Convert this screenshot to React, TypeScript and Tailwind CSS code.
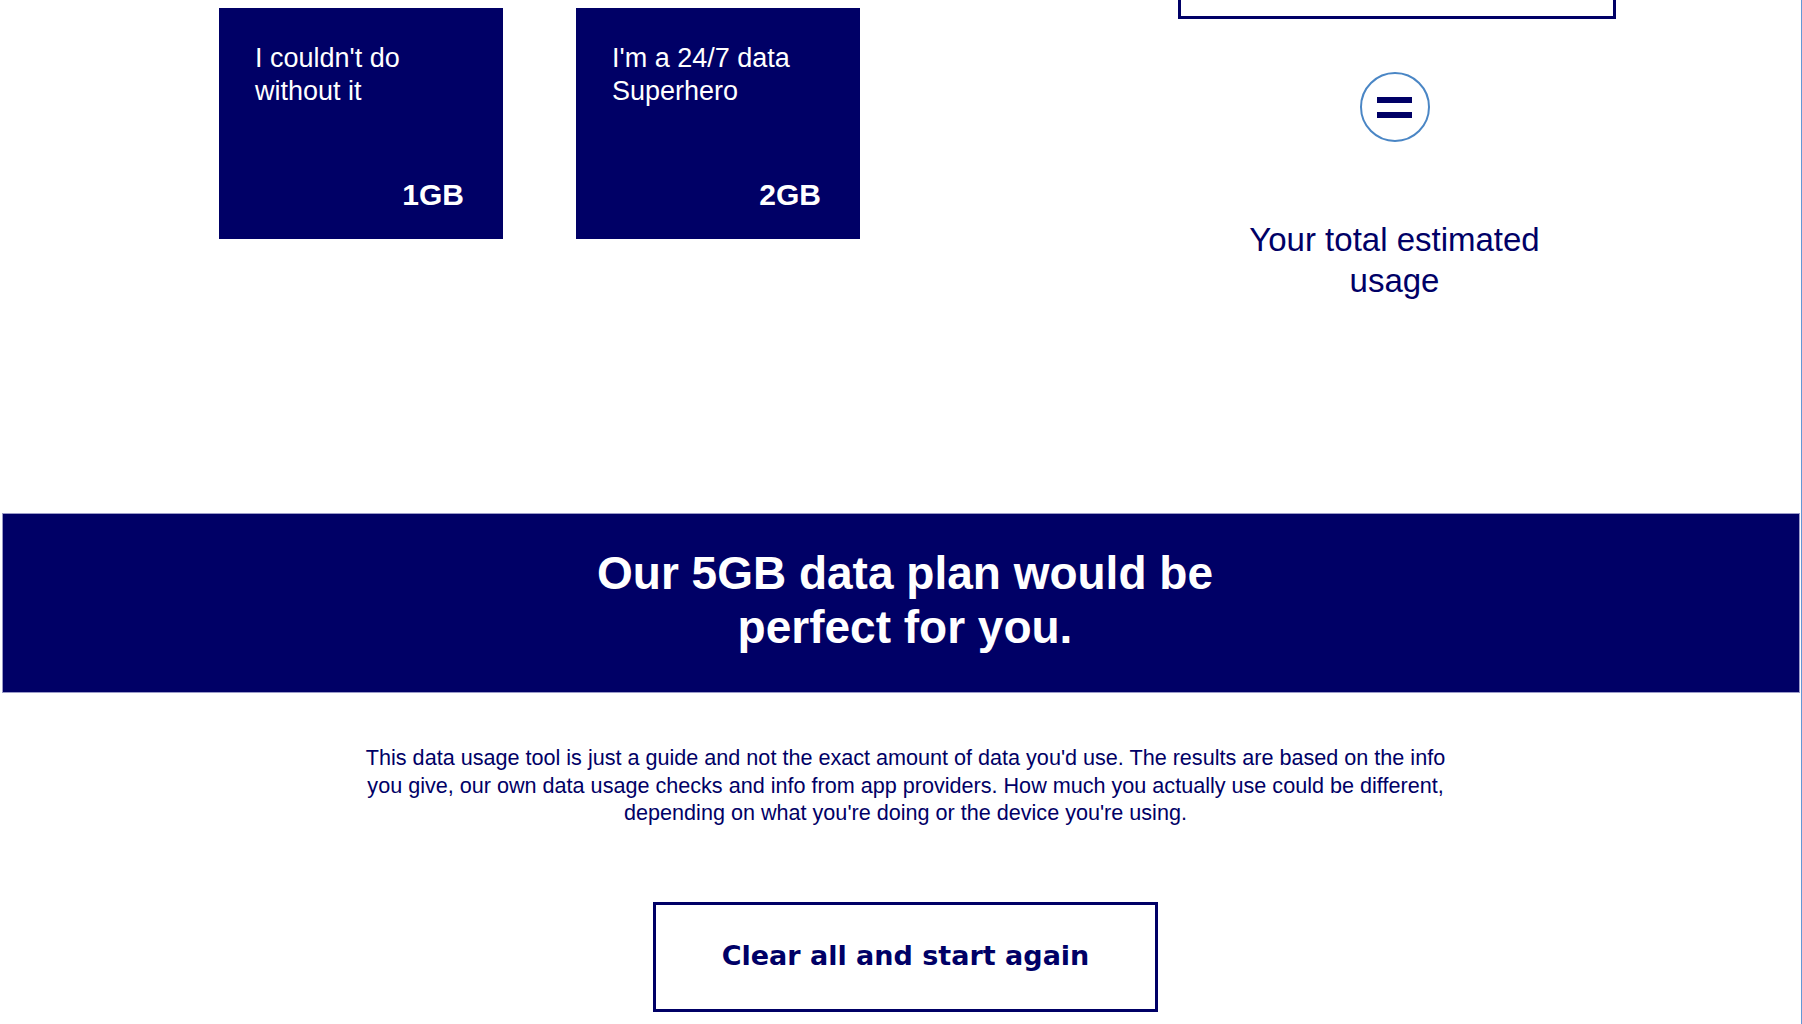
const NAVY = "text-[#000066]"

function UsageCard({ label, amount }: { label: string; amount: string }) {
  return (
    <div className="flex h-[231px] w-[284px] flex-col justify-between bg-[#000066] pb-[29px] pl-[36px] pr-[39px] pt-[34px] text-white">
      <p className="max-w-[200px] text-[27px] leading-[33px]">{label}</p>
      <p className="text-right text-[30px] font-bold leading-[30px]">{amount}</p>
    </div>
  )
}

export default function App() {
  return (
    <div className="min-h-screen border-r border-[#6398d6] bg-white font-['Liberation_Sans',Arial,sans-serif]">
      <div className="flex h-[513px] items-start">
        <div className="ml-[219px] mt-[8px] flex gap-[73px]">
          <UsageCard label="I couldn't do without it" amount="1GB" />
          <UsageCard label="I'm a 24/7 data Superhero" amount="2GB" />
        </div>

        <div className="ml-auto mr-[185px] flex w-[438px] flex-col">
          <div className="h-[19px] w-full border-[3px] border-t-0 border-[#000066]" />
          <div className="flex flex-col items-center pr-[5px]">
            <div className="mt-[53px] flex size-[70px] flex-col items-center justify-center gap-[9px] rounded-full border-2 border-[#4a86c5]">
              <span className="h-[6px] w-[35px] bg-[#000066]" />
              <span className="h-[6px] w-[35px] bg-[#000066]" />
            </div>
            <p className={`mt-[77px] max-w-[320px] text-center text-[33px] leading-[41px] ${NAVY}`}>
              Your total estimated usage
            </p>
          </div>
        </div>
      </div>

      <div className="ml-[2px] mr-[1px] border border-[#9a9ac8] bg-[#000066] pb-[38px] pl-[8px] pt-[32px]">
        <h2 className="mx-auto max-w-[680px] text-center text-[46px] font-bold leading-[54px] text-white">
          Our 5GB data plan would be perfect for you.
        </h2>
      </div>

      <div className="flex flex-col items-center pl-[10px]">
        <p className={`mt-[51px] max-w-[1100px] text-center text-[21.6px] leading-[27.5px] ${NAVY}`}>
          This data usage tool is just a guide and not the exact amount of data you'd use. The results are based on the info you give, our own data usage checks and info from app providers. How much you actually use could be different, depending on what you're doing or the device you're using.
        </p>
        <button
          type="button"
          className={`mt-[75px] h-[110px] w-[505px] border-[3px] border-[#000066] bg-white font-['DejaVu_Sans',Verdana,sans-serif] text-[27px] font-bold ${NAVY}`}
        >
          Clear all and start again
        </button>
      </div>
    </div>
  )
}
